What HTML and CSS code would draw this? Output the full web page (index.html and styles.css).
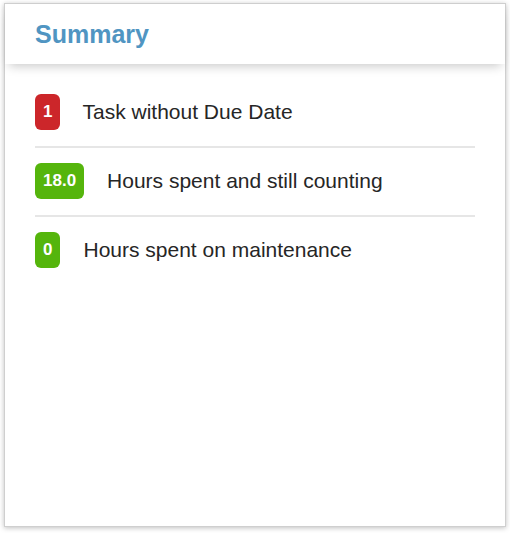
FILE: index.html
```html
<!DOCTYPE html>
<html>
<head>
<meta charset="utf-8">
<link rel="stylesheet" href="styles.css">
</head>
<body>
<div class="card">
  <div class="header"><h1 class="title">Summary</h1></div>
  <ul class="list">
    <li class="row"><span class="badge red">1</span><span class="label">Task without Due Date</span></li>
    <li class="row"><span class="badge green">18.0</span><span class="label">Hours spent and still counting</span></li>
    <li class="row"><span class="badge green">0</span><span class="label">Hours spent on maintenance</span></li>
  </ul>
</div>
</body>
</html>
```

FILE: styles.css
```css
html, body { margin: 0; padding: 0; background: #fff; }
body { padding: 3px 4px 6px 4px; font-family: "Liberation Sans", Arial, sans-serif; }
.card {
  height: 524px;
  box-sizing: border-box;
  border: 1px solid #cfcfcf;
  background: #fff;
  box-shadow: 0 1px 5px rgba(0,0,0,0.25);
}
.header {
  height: 60px;
  box-sizing: border-box;
  padding: 0 30px;
  display: flex;
  align-items: center;
  box-shadow: 0 6px 10px -4px rgba(0,0,0,0.22);
  position: relative;
}
.title { margin: 0; font-size: 25px; font-weight: bold; color: #5095c2; }
.list { list-style: none; margin: 15px 30px 0 30px; padding: 0; }
.row {
  display: flex;
  align-items: center;
  padding: 15px 0 16px 0;
  border-bottom: 2px solid #e6e6e6;
}
.row:last-child { border-bottom: none; }
.badge {
  display: inline-flex;
  align-items: center;
  justify-content: center;
  height: 36px;
  min-width: 25px;
  padding: 0 8px;
  box-sizing: border-box;
  border-radius: 6px;
  color: #fff;
  font-weight: bold;
  font-size: 17px;
}
.red { background: #cc262a; }
.green { background: #55b50c; }
.label { margin-left: 22px; font-size: 21px; color: #262626; }
.badge.green + .label { margin-left: 23px; }
```
